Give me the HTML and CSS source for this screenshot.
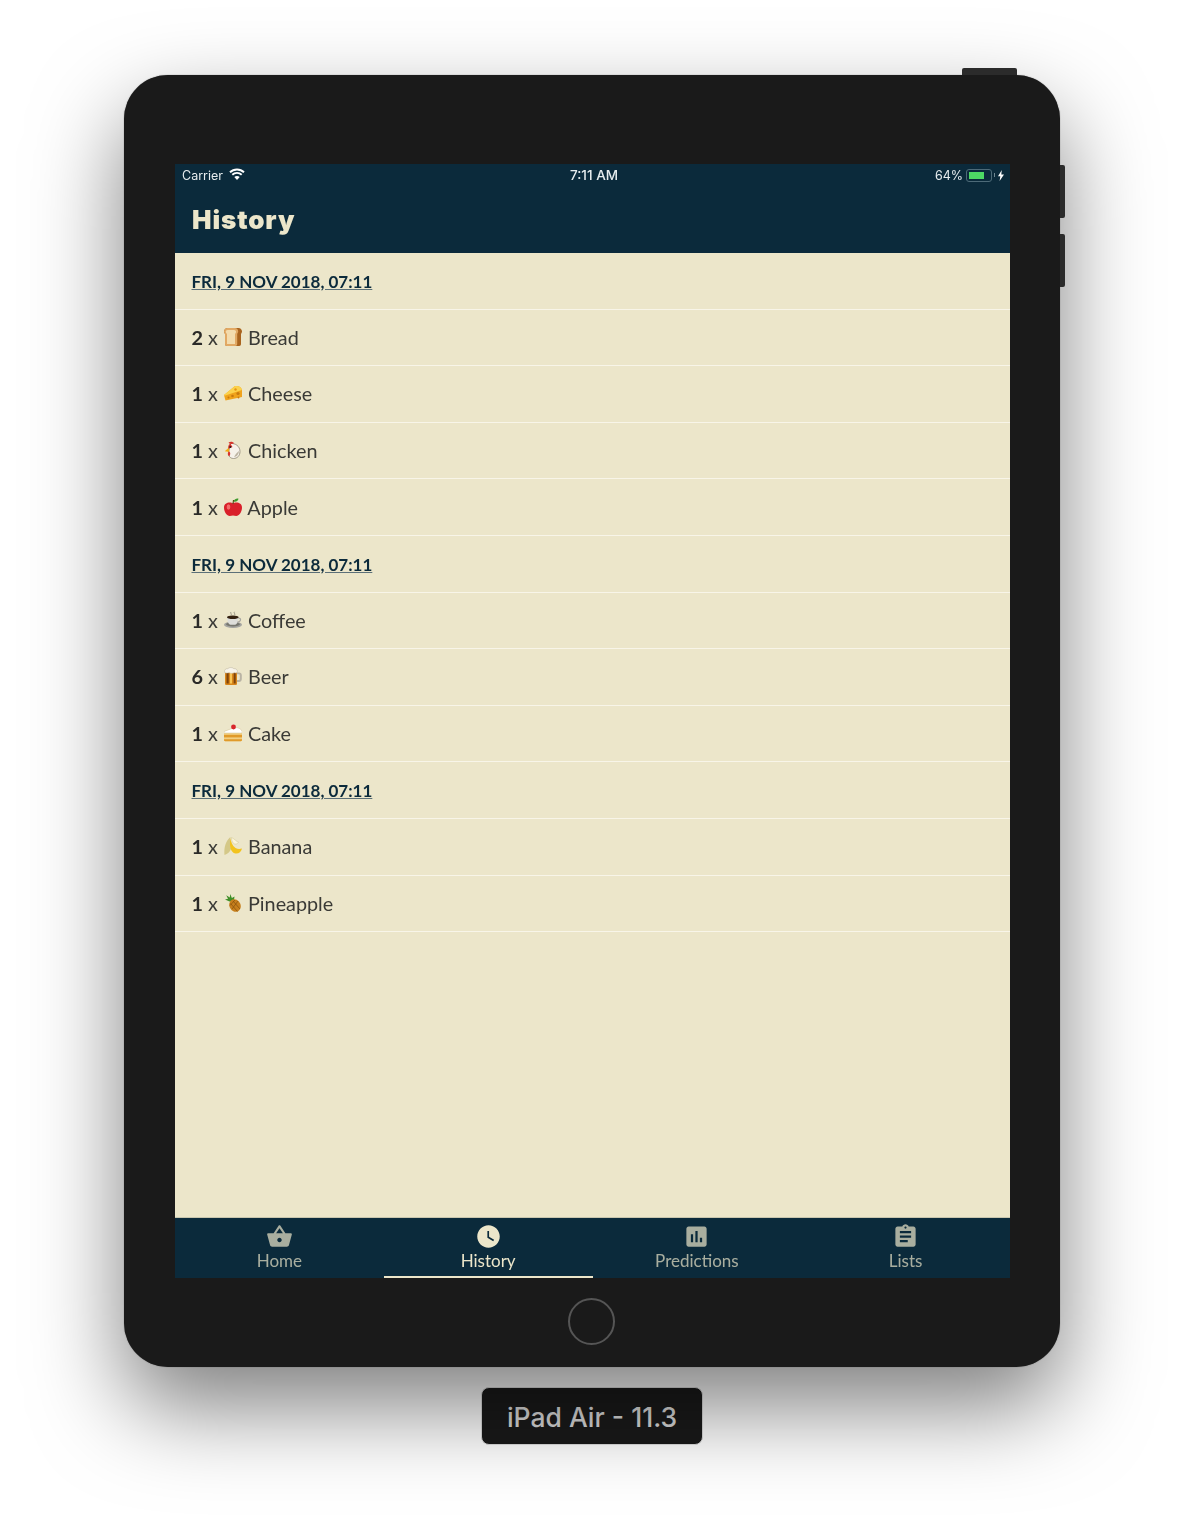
FILE: index.html
```html
<!DOCTYPE html>
<html>
<head>
<meta charset="utf-8">
<title>History</title>
<link rel="stylesheet" href="styles.css">
</head>
<body>
<svg class="defs" width="0" height="0">
  <symbol id="e-bread" viewBox="0 0 18 18">
    <path d="M3.500 0C1.500 0 0 1.800 0 3.600c0 1.100.8 1.700 1 2.400v10c0 1 .7 2 1.800 2h12.500c1 0 1.700-1 1.700-2V6c.4-.7 1-1.300 1-2.400C18 1.800 16.500 0 14.500 0z" fill="#a9641f"/>
    <path d="M3.500 0h7.500c2 0 3.200 1.800 3.200 3.600 0 1.100-.8 1.700-1 2.400v10c0 1-.7 2-1.800 2H2.800c-1 0-1.800-1-1.800-2V6c-.2-.7-1-1.300-1-2.400C0 1.800 1.500 0 3.500 0z" fill="#e2a964"/>
    <path d="M3.500 2h6.500c1.500 0 2.300 1 2 2.300-.2.800-.9 1.200-1 2V16H3V6.300c-.1-.8-1-1.200-1.200-2C1.500 3 2.200 2 3.500 2z" fill="#f3dcae"/>
  </symbol>
  <symbol id="e-cheese" viewBox="0 0 18 18">
    <path d="M0 11 11 2c3.500-.6 6.500 1 7 4v7L1.500 16.500z" fill="#f0a31c"/>
    <path d="M0 11 11 2c3.500-.6 6.500 1 7 4L.5 11.800z" fill="#fcd24c"/>
    <circle cx="14" cy="9.500" r="1.600" fill="#c87a0e"/>
    <circle cx="8.500" cy="12" r="1.300" fill="#c87a0e"/>
    <circle cx="11.500" cy="5.500" r="1.200" fill="#e59515"/>
    <circle cx="4.500" cy="13.500" r="1" fill="#c87a0e"/>
    <circle cx="14.500" cy="13.500" r=".9" fill="#c87a0e"/>
  </symbol>
  <symbol id="e-chicken" viewBox="0 0 18 18">
    <path d="M6.500 2.500c4.500-.5 9.500 2.500 9.500 8 0 4.200-2.700 7-6.500 7-3.500 0-5-2.500-5-6z" fill="#f6f2ea" stroke="#8f8676" stroke-width=".8"/>
    <path d="M10 16c2.500-.3 4.800-2.500 5-6-1.500 1-3.500 3-5 6z" fill="#bdb4a2"/>
    <path d="M4.500 1.800C6 .3 9 .5 10 2.300 8.500 3 6 3.500 4.500 1.800z" fill="#d8322a"/>
    <path d="M5 6.500.8 10.200l4.600.8z" fill="#f2ae14"/>
    <path d="M4.800 10.500c1.800.2 2 3.800.3 4.700-1.600-.9-1.800-3.300-.3-4.700zM6.500 2.800C4.500 3.500 3.800 5.800 4.400 7.800L8.500 6z" fill="#d8322a"/>
    <circle cx="6.300" cy="5.900" r="1" fill="#1f1f1f"/>
  </symbol>
  <symbol id="e-apple" viewBox="0 0 18 18">
    <path d="M9 5.500C11 3.800 18 3.700 18 9.700c0 4-3 8.300-5.700 8.300-1.200 0-2.300-.5-3.300-.5s-2.100.5-3.300.5C3 18 0 13.700 0 9.700 0 3.700 7 3.800 9 5.500z" fill="#d9202a"/>
    <ellipse cx="4.500" cy="9" rx="1.800" ry="2.800" fill="#f26c6a"/>
    <path d="M9 6 9.500 2" stroke="#5a3a12" stroke-width="1.100"/>
    <path d="M9.500 3.500C10.500 1 12.800.2 14.500.8c-.5 2.200-2.800 3.500-5 2.700z" fill="#3f9a2c"/>
  </symbol>
  <symbol id="e-coffee" viewBox="0 0 18 18">
    <path d="M7 1c-1.200 1.200 1.200 1.800 0 3.500M10.500.8c-1.200 1.200 1.200 1.800 0 3.500" stroke="#8f8a7c" stroke-width=".9" fill="none"/>
    <ellipse cx="9" cy="13.800" rx="9" ry="3.200" fill="#a4a4a0"/>
    <ellipse cx="9" cy="13.300" rx="7" ry="2.200" fill="#77776f"/>
    <path d="M3 6h11.500c0 3.800-1.500 7.500-3.500 7.700H6.500C4.500 13.500 3 9.800 3 6z" fill="#dededa"/>
    <path d="M14.300 7.200c3-.6 3.300 3.400-.9 3.800" stroke="#a8a6a0" stroke-width="1.200" fill="none"/>
    <ellipse cx="8.800" cy="6.300" rx="5.800" ry="1.800" fill="#33200f"/>
  </symbol>
  <symbol id="e-beer" viewBox="0 0 18 18">
    <path d="M12.500 5.500h2.500c1.800 0 2.800 1 2.800 2.800v3.700c0 2-1.200 3-2.800 3h-2.500v-1.900h2c.8 0 1.300-.5 1.300-1.300V8.400c0-.7-.4-1.100-1.200-1.100h-2.100z" fill="#b9b3a4"/>
    <rect x="1" y="3" width="12" height="15" rx="1.200" fill="#d9861a"/>
    <rect x="2.500" y="6" width="2.200" height="10.500" fill="#7f430a"/>
    <rect x="6" y="6" width="2" height="10.500" fill="#f8c555"/>
    <rect x="9.700" y="6" width="2" height="10.500" fill="#7f430a"/>
    <path d="M.6 5.500C-.2 2.800 2 1.400 3.800 1.700 5 .1 8.600.1 9.800 1.700c2-.4 4.100 1 3.600 3.800-2.100 1.100-2.700-.2-3.800.4-1.100.6-2.700.6-3.800 0-1.300-.6-3 .8-5.200-.4z" fill="#f8f4ea" stroke="#b8b09c" stroke-width=".5"/>
  </symbol>
  <symbol id="e-cake" viewBox="0 0 18 18">
    <path d="M0 7.500 10.500 3.500c4 0 6.900 1.500 7.500 3.800V16c0 .7-.5 1.200-1.200 1.200H1.200C.5 17.200 0 16.700 0 16z" fill="#f2d083"/>
    <path d="M0 10.800h18v2.600H0z" fill="#e09a2a"/>
    <path d="M0 15.200h18V16c0 .7-.5 1.200-1.200 1.200H1.200C.5 17.200 0 16.700 0 16z" fill="#e09a2a"/>
    <path d="M0 7.500 10.500 3.500c4 0 6.900 1.500 7.500 3.800V9H0z" fill="#fff" stroke="#cfc4a0" stroke-width=".5"/>
    <circle cx="9.500" cy="3" r="2.400" fill="#d8262c"/>
  </symbol>
  <symbol id="e-banana" viewBox="0 0 18 18">
    <path d="M6.500 0C3 2.500-.5 9 .5 18c3-1 5.500-3 6.500-6C6 8 5.800 4 6.500 0z" fill="#d4c888"/>
    <path d="M6.500 1C5 9 6.500 15.500 11.500 16.500c3 .5 5.800-1.500 6.500-5-2.500.8-4.500.6-6.500-.6C8 8.500 7 5 6.500 1z" fill="#f2c31e"/>
    <path d="M7.500.5c3.500 1.500 5 4.500 7 4.500-.8 2.300-4 2.800-5.300 1C8 4.500 7.500 2.500 7.500.5z" fill="#fbf5dc" stroke="#cfc48e" stroke-width=".5"/>
  </symbol>
  <symbol id="e-pineapple" viewBox="0 0 18 18">
    <path d="M5.500 7.500 1 5.500l3-.7L2.200 1.300 5.800 3.500 6.200 0l1.700 4 2.600-1.500L9.800 7.500z" fill="#3f8f28"/>
    <ellipse cx="11" cy="11.500" rx="5.600" ry="6.500" transform="rotate(-25 11 11.500)" fill="#c67f1c"/>
    <path d="M6.500 9.500l7 8M9 7l7 8M8 15 14 7M6 11.500 11 6" stroke="#85500d" stroke-width=".7"/>
  </symbol>
</svg>

<div class="device">
  <span class="btn-top"></span>
  <span class="btn-side btn-up"></span>
  <span class="btn-side btn-down"></span>

  <div class="screen">
    <div class="topbar">
      <div class="status">
        <div class="status-l">
          <span>Carrier</span>
          <svg class="wifi" viewBox="0 0 16 12"><path d="M1 4.300C4.800.6 11.200.6 15 4.300M3.300 6.700c2.600-2.500 6.800-2.500 9.400 0" fill="none" stroke="#fff" stroke-width="1.900"/><path d="M5.300 9c1.500-1.400 3.900-1.400 5.400 0L8 12z" fill="#fff"/></svg>
        </div>
        <div class="status-c">7:11 AM</div>
        <div class="status-r">
          <span>64%</span>
          <span class="battery"><span class="battery-fill"></span></span>
          <span class="battery-tip"></span>
          <svg class="bolt" viewBox="0 0 6 11"><path d="M3.800 0 0 6.200h2.300L1.600 11 6 4.500H3.300z"/></svg>
        </div>
      </div>
      <h1 class="title">History</h1>
    </div>

    <ul class="list">
      <li class="row date"><span>FRI, 9 NOV 2018, 07:11</span></li>
      <li class="row"><b>2</b>&nbsp;x <svg class="emoji"><use href="#e-bread"/></svg> Bread</li>
      <li class="row"><b>1</b>&nbsp;x <svg class="emoji"><use href="#e-cheese"/></svg> Cheese</li>
      <li class="row"><b>1</b>&nbsp;x <svg class="emoji"><use href="#e-chicken"/></svg> Chicken</li>
      <li class="row"><b>1</b>&nbsp;x <svg class="emoji"><use href="#e-apple"/></svg> Apple</li>
      <li class="row date"><span>FRI, 9 NOV 2018, 07:11</span></li>
      <li class="row"><b>1</b>&nbsp;x <svg class="emoji"><use href="#e-coffee"/></svg> Coffee</li>
      <li class="row"><b>6</b>&nbsp;x <svg class="emoji"><use href="#e-beer"/></svg> Beer</li>
      <li class="row"><b>1</b>&nbsp;x <svg class="emoji"><use href="#e-cake"/></svg> Cake</li>
      <li class="row date"><span>FRI, 9 NOV 2018, 07:11</span></li>
      <li class="row"><b>1</b>&nbsp;x <svg class="emoji"><use href="#e-banana"/></svg> Banana</li>
      <li class="row"><b>1</b>&nbsp;x <svg class="emoji"><use href="#e-pineapple"/></svg> Pineapple</li>
    </ul>

    <div class="tabs">
      <div class="tab">
        <svg viewBox="0 0 24 24"><path d="M17.210 9l-4.380-6.560c-.19-.28-.51-.42-.83-.42-.32 0-.64.14-.83.43L6.790 9H2c-.55 0-1 .45-1 1 0 .09.01.18.04.27l2.540 9.270c.23.84 1 1.460 1.920 1.460h13c.92 0 1.690-.62 1.930-1.460l2.540-9.270L23 10c0-.55-.45-1-1-1h-4.790zM9 9l3-4.400L15 9H9zm3 8c-1.100 0-2-.9-2-2s.9-2 2-2 2 .9 2 2-.9 2-2 2z"/></svg>
        <span>Home</span>
      </div>
      <div class="tab active">
        <svg viewBox="0 0 24 24"><path d="M12 2C6.500 2 2 6.500 2 12s4.500 10 10 10 10-4.500 10-10S17.500 2 12 2zm4.200 14.200L11 13V7h1.500v5.200l4.500 2.700-.8 1.300z"/></svg>
        <span>History</span>
      </div>
      <div class="tab">
        <svg viewBox="0 0 24 24"><path d="M19 3H5c-1.100 0-2 .9-2 2v14c0 1.100.9 2 2 2h14c1.100 0 2-.9 2-2V5c0-1.100-.9-2-2-2zM9 17H7v-7h2v7zm4 0h-2V7h2v10zm4 0h-2v-4h2v4z"/></svg>
        <span>Predictions</span>
      </div>
      <div class="tab">
        <svg viewBox="0 0 24 24"><path d="M19 3h-4.180C14.400 1.840 13.300 1 12 1c-1.300 0-2.400.84-2.820 2H5c-1.100 0-2 .9-2 2v14c0 1.100.9 2 2 2h14c1.100 0 2-.9 2-2V5c0-1.100-.9-2-2-2zm-7 0c.55 0 1 .45 1 1s-.45 1-1 1-1-.45-1-1 .45-1 1-1zm2 14H7v-2h7v2zm3-4H7v-2h10v2zm0-4H7V7h10v2z"/></svg>
        <span>Lists</span>
      </div>
    </div>
  </div>

  <div class="home-area"><span class="home-btn"></span></div>
</div>

<div class="device-name">iPad Air - 11.3</div>
</body>
</html>
```

FILE: styles.css
```css
html, body {
  margin: 0;
  height: 100%;
  background: #fff;
}
body {
  display: flex;
  flex-direction: column;
  align-items: center;
  padding-top: 75px;
  box-sizing: border-box;
  overflow: hidden;
  font-family: "Lato", "Noto Sans", sans-serif;
}
.defs {
  position: absolute;
}

.device {
  position: relative;
  box-sizing: border-box;
  width: 936px;
  height: 1292px;
  padding: 89px 50px 0 51px;
  background: #1a1a1a;
  border-radius: 44px;
  box-shadow: 0 0 1px #555, 0 40px 90px rgba(0, 0, 0, .5);
}
.btn-top {
  position: absolute;
  top: -7px;
  left: 838px;
  width: 55px;
  height: 7px;
  background: #2b2b2b;
  border-radius: 2px 2px 0 0;
}
.btn-side {
  position: absolute;
  left: 936px;
  width: 5px;
  height: 53px;
  background: #2b2b2b;
  border-radius: 0 2px 2px 0;
}
.btn-up { top: 90px; }
.btn-down { top: 159px; }

.screen {
  display: flex;
  flex-direction: column;
  height: 1114px;
  background: #ece6ca;
  filter: blur(.3px);
}
.topbar {
  height: 89px;
  background: #0b2a3b;
  color: #ece6ca;
}
.status {
  display: grid;
  grid-template-columns: 1fr auto 1fr;
  align-items: center;
  height: 22px;
  padding: 0 6px 0 7px;
  font-family: "Inter", "Liberation Sans", sans-serif;
  font-size: 12.500px;
  color: #e6ecee;
}
.status-l {
  display: flex;
  align-items: center;
  gap: 6px;
}
.status-c {
  font-size: 13.500px;
  font-weight: 500;
  margin-left: 2px;
}
.status-r {
  display: flex;
  align-items: center;
  justify-content: flex-end;
}
.wifi {
  width: 16px;
  height: 12px;
  margin-top: -2px;
}
.battery {
  box-sizing: border-box;
  width: 26px;
  height: 13px;
  margin-left: 3px;
  padding: 2px;
  border: 1px solid #4d6a78;
  border-radius: 3px;
}
.battery-fill {
  display: block;
  width: 15px;
  height: 100%;
  background: #4cd964;
}
.battery-tip {
  width: 1px;
  height: 4px;
  margin-left: 2px;
  background: #6f8792;
}
.bolt {
  width: 6px;
  height: 11px;
  margin-left: 3px;
  fill: #fff;
}
.title {
  margin: 0;
  padding: 18px 0 0 17px;
  font-family: "Inter", "Liberation Sans", sans-serif;
  font-size: 26px;
  line-height: 32px;
  font-weight: 900;
  letter-spacing: .9px;
  color: #ece6ca;
}

.list {
  flex: 1;
  margin: 0;
  padding: 0;
  list-style: none;
  font-size: 19.800px;
  color: #3a3a36;
}
.row {
  box-sizing: border-box;
  display: flex;
  align-items: center;
  white-space: pre;
  height: 56.600px;
  padding: 0 0 1px 16.500px;
  border-bottom: 1.500px solid #f8f5e8;
}
.row b {
  color: #2a2a28;
  font-weight: 700;
}
.date {
  font-size: 17px;
  font-weight: 700;
  color: #0b2a3b;
}
.date span {
  margin-top: 2px;
  text-decoration: underline;
  text-decoration-color: #5c7078;
}
.emoji {
  width: 18px;
  height: 18px;
  margin: 0 1px;
  flex: none;
}

.tabs {
  display: grid;
  grid-template-columns: repeat(4, 1fr);
  height: 61px;
  background: #0b2a3b;
  border-top: 1px solid #c8c6ae;
  box-sizing: border-box;
}
.tab {
  box-sizing: border-box;
  display: flex;
  flex-direction: column;
  align-items: center;
  height: 60px;
  padding-top: 5px;
  font-size: 17px;
  line-height: 22px;
  color: #ece6ca;
  opacity: .7;
}
.tab svg {
  width: 27px;
  height: 27px;
  fill: #ece6ca;
}
.tab.active {
  opacity: 1;
  border-bottom: 2px solid #ece6ca;
}

.home-area {
  display: flex;
  justify-content: center;
  padding: 20px 2px 0 0;
}
.home-btn {
  box-sizing: border-box;
  width: 47px;
  height: 47px;
  border: 2px solid #555;
  border-radius: 50%;
}

.device-name {
  box-sizing: border-box;
  width: 222px;
  height: 58px;
  margin-top: 20px;
  background: #1a1a1a;
  border: 1px solid #ddd;
  border-radius: 8px;
  color: #dcdcdc;
  font-family: "Inter", "Liberation Sans", sans-serif;
  font-size: 26.500px;
  font-weight: 500;
  line-height: 58px;
  text-align: center;
}
```
